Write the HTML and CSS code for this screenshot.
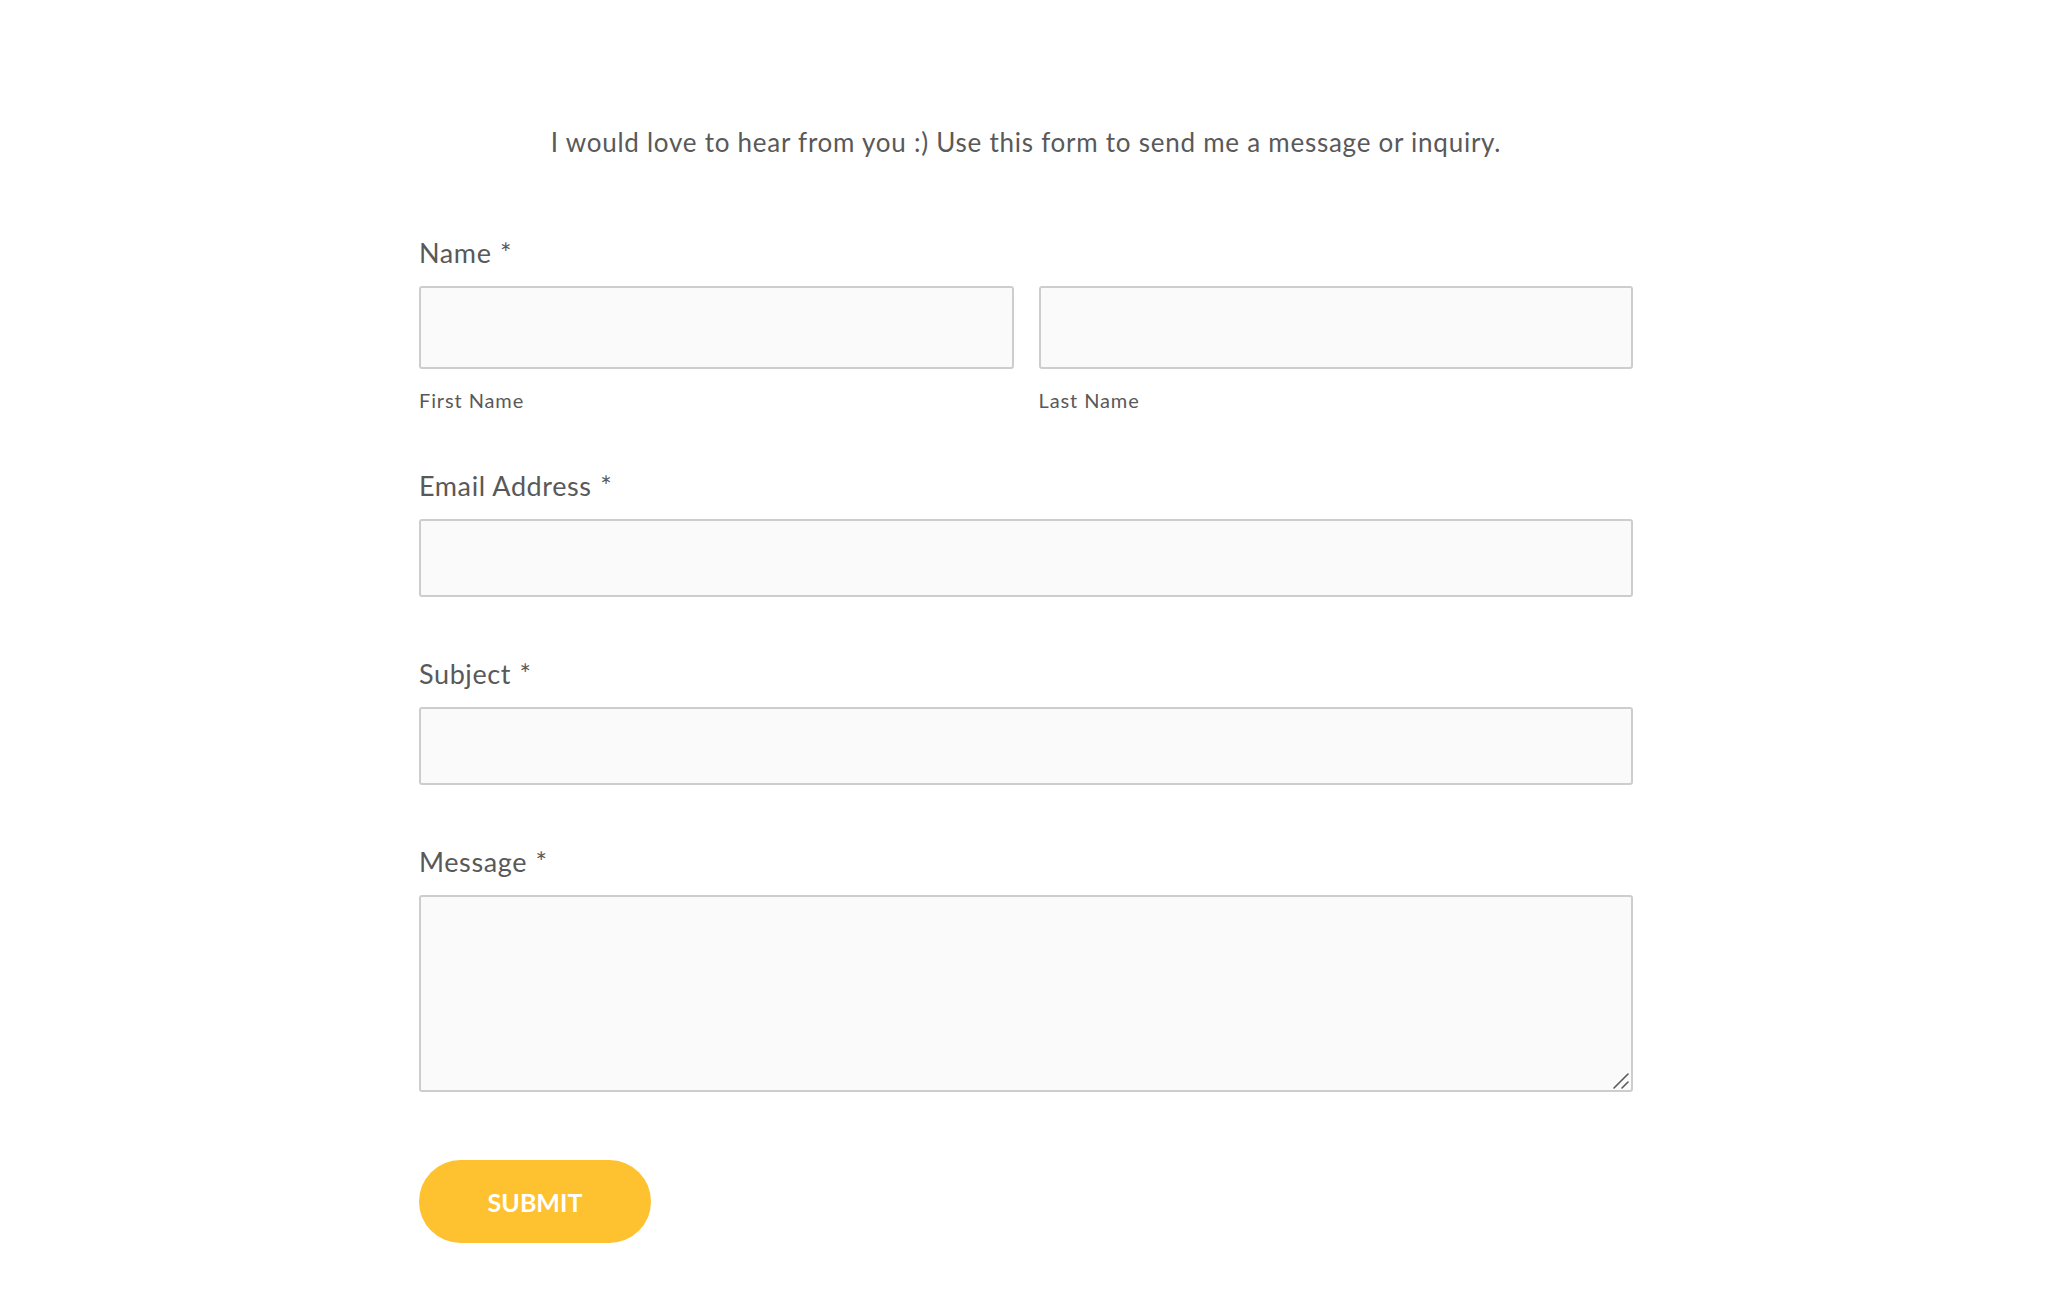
FILE: index.html
```html
<!DOCTYPE html>
<html lang="en">
<head>
<meta charset="utf-8">
<title>Contact</title>
<link rel="stylesheet" href="styles.css">
</head>
<body>
<main class="page">
  <p class="intro">I would love to hear from you :) Use this form to send me a message or inquiry.</p>
  <form class="form">
    <fieldset class="field field-name">
      <legend class="label">Name <span class="req">*</span></legend>
      <div class="name-row">
        <div class="name-col">
          <input class="input input-name" type="text" aria-label="First Name">
          <span class="sublabel">First Name</span>
        </div>
        <div class="name-col">
          <input class="input input-name" type="text" aria-label="Last Name">
          <span class="sublabel">Last Name</span>
        </div>
      </div>
    </fieldset>
    <div class="field">
      <label class="label" for="email">Email Address <span class="req">*</span></label>
      <input class="input" id="email" type="email">
    </div>
    <div class="field">
      <label class="label" for="subject">Subject <span class="req">*</span></label>
      <input class="input" id="subject" type="text">
    </div>
    <div class="field">
      <label class="label" for="message">Message <span class="req">*</span></label>
      <div class="textarea-wrap">
        <textarea class="input textarea" id="message"></textarea>
        <svg class="grip" width="16" height="16" viewBox="0 0 16 16" aria-hidden="true">
          <path d="M1 15 L15 1 M9 15 L15 9" stroke="#5a5a5a" stroke-width="1.6" stroke-linecap="round" fill="none"/>
        </svg>
      </div>
    </div>
    <button class="submit" type="button">SUBMIT</button>
  </form>
</main>
</body>
</html>
```
FILE: styles.css
```css
html, body {
  margin: 0;
  padding: 0;
  background: #ffffff;
}

body {
  font-family: Lato, "Open Sans", sans-serif;
  color: #595959;
}

.page {
  width: 1214px;
  margin: 0 auto;
  padding-top: 124px;
  padding-bottom: 60px;
}

.intro {
  margin: 0;
  text-align: center;
  font-size: 26px;
  line-height: 36px;
  letter-spacing: 0.75px;
}

.form {
  margin-top: 76px;
  display: flex;
  flex-direction: column;
}

.field {
  border: 0;
  margin: 0;
  padding: 0;
  min-width: 0;
  display: flex;
  flex-direction: column;
  margin-bottom: 60px;
}

.field-name {
  display: block;
  margin-bottom: 56px;
}

.label {
  display: block;
  padding: 0;
  font-size: 27px;
  line-height: 34px;
  margin-bottom: 16px;
  letter-spacing: 0.6px;
}

.req {
  margin-left: 1px;
}

.name-row {
  display: grid;
  grid-template-columns: 1fr 1fr;
  column-gap: 25px;
}

.name-col {
  display: flex;
  flex-direction: column;
}

.input {
  box-sizing: border-box;
  width: 100%;
  height: 78px;
  margin: 0;
  padding: 12px 16px;
  border: 2px solid #cdcdcd;
  border-radius: 3px;
  background: #fafafa;
  font-family: inherit;
  font-size: 22px;
  color: #333;
  outline: none;
}

.input-name {
  height: 83px;
}

.textarea-wrap {
  position: relative;
}

.textarea {
  height: 197px;
  resize: none;
  display: block;
}

.grip {
  position: absolute;
  right: 4px;
  bottom: 3px;
  pointer-events: none;
}

.sublabel {
  display: block;
  margin-top: 18px;
  font-size: 20px;
  line-height: 26px;
  letter-spacing: 0.9px;
}

.submit {
  align-self: flex-start;
  margin-top: 8px;
  width: 232px;
  height: 83px;
  border: 0;
  border-radius: 42px;
  background: #fec12f;
  color: #ffffff;
  font-family: inherit;
  font-weight: 700;
  font-size: 25px;
  letter-spacing: 0;
  cursor: pointer;
}
```
